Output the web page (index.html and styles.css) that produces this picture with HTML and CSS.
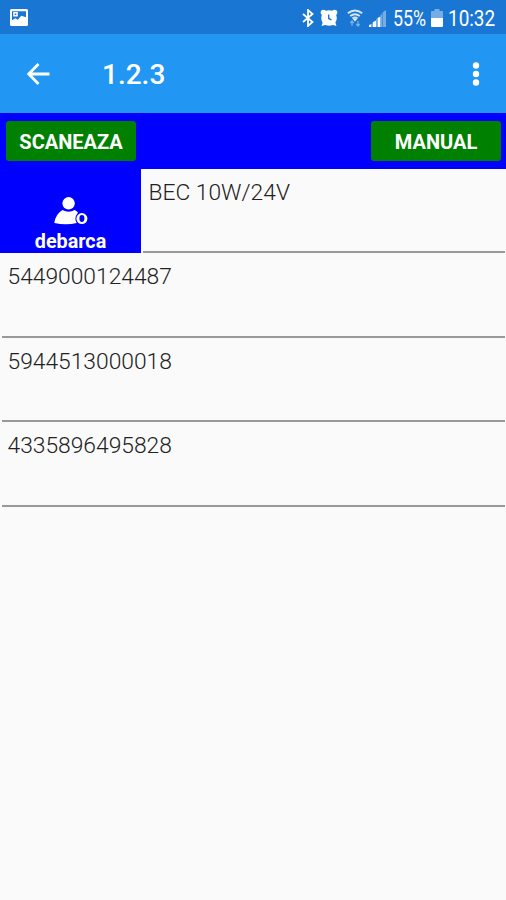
FILE: index.html
```html
<!DOCTYPE html>
<html lang="ro">
<head>
  <meta charset="utf-8">
  <title>1.2.3</title>
  <meta name="viewport" content="width=device-width, initial-scale=1">
  <link rel="stylesheet" href="styles.css">
</head>
<body>
  <div class="statusbar">
    <svg class="picture" width="18" height="17" viewBox="0 0 18 17">
      <path fill="#fff" fill-rule="evenodd" d="M1.500 0h15A1.500 1.500 0 0 1 18 1.500v14a1.500 1.500 0 0 1-1.500 1.500h-15A1.500 1.500 0 0 1 0 15.500v-14A1.500 1.500 0 0 1 1.500 0zM2 2.200v9l3.300-2 2.500 1.500 3.500-4 4.700 1.500v-6z"/>
      <path fill="#fff" fill-rule="evenodd" d="M3.200 3h4.600v4.600H3.200zM4.700 4.500v1.600h1.600V4.500z"/>
    </svg>
    <div class="status-icons">
      <svg class="bluetooth" width="12" height="18" viewBox="0 0 12 18">
        <path d="M1 5l9.500 8L6 17V1l4.500 4L1 13" fill="none" stroke="#fff" stroke-width="1.800"/>
      </svg>
      <svg class="alarm" width="18" height="18" viewBox="0 0 18 18">
        <g fill="#fff">
          <circle cx="9" cy="9" r="7.800"/>
          <circle cx="3.500" cy="3.500" r="2.800"/>
          <circle cx="14.500" cy="3.500" r="2.800"/>
          <path d="M1.500 17l2-6 5 4zM16.500 17l-2-6-5 4z"/>
        </g>
        <path d="M8.700 5.500v4l2.800 1.300" fill="none" stroke="#1976d2" stroke-width="1.400"/>
      </svg>
      <svg class="wifi" width="16" height="18" viewBox="0 0 16 18">
        <g fill="none" stroke="#d4e6f7" stroke-width="1.900">
          <path d="M.8 4.200q7.200-5.600 14.400 0"/>
          <path d="M3.200 7q4.800-3.700 9.600 0"/>
          <path d="M5.500 9.600q2.500-2 5 0"/>
        </g>
        <path d="M8 12.500L5.800 9.800h4.400z" fill="#fff"/>
        <path d="M5 12v5M3.300 14L5 12l1.700 2M11 12v5M9.300 15l1.700 2 1.700-2" fill="none" stroke="#7db3e6" stroke-width="1.200"/>
      </svg>
      <svg class="signal" width="17" height="17" viewBox="0 0 17 17">
        <path fill="#fff" d="M0 15l2.500-1V17H0zM4 12l3-1.500V17H4zM8.500 8l3-1.500V17h-3z"/>
        <path fill="#75ade4" d="M2.500 14L4 12.500V17H2.500zM7 9.500L8.500 8v9H7zM11.500 5L13 4v13h-1.500zM13.500 2.500L17 0v17h-3.500z"/>
      </svg>
      <span class="percent">55%</span>
      <svg class="battery" width="12" height="18" viewBox="0 0 12 18">
        <path fill="#75ade4" d="M3.500 0h5v2H11a1 1 0 0 1 1 1v6H0V3a1 1 0 0 1 1-1h2.500z"/>
        <path fill="#fff" d="M0 9h12v8a1 1 0 0 1-1 1H1a1 1 0 0 1-1-1z"/>
      </svg>
      <span class="clock">10:32</span>
    </div>
  </div>

  <div class="appbar">
    <svg class="back" width="24" height="22" viewBox="0 0 24 22">
      <path d="M22.500 11H2M11.500 1L1.700 11l9.800 10" fill="none" stroke="#fff" stroke-width="2.800"/>
    </svg>
    <h1>1.2.3</h1>
    <svg class="more" width="8" height="24" viewBox="0 0 8 24">
      <g fill="#fff">
        <circle cx="4" cy="3.500" r="3.200"/>
        <circle cx="4" cy="12" r="3.200"/>
        <circle cx="4" cy="20.500" r="3.200"/>
      </g>
    </svg>
  </div>

  <div class="buttons">
    <button class="scan">SCANEAZA</button>
    <button class="manual">MANUAL</button>
  </div>

  <ul class="list">
    <li class="swiped">
      <div class="action">
        <svg width="34" height="28" viewBox="0 0 34 28">
          <g fill="#fff">
            <circle cx="14.600" cy="6.300" r="6.200"/>
            <path d="M.3 26Q1.500 17 8.500 13q6.100 3.600 12.200 0 1.800.8 3.300 2.500-4.500 5.500-1.200 10.500Q12 28.500.3 26z"/>
            <circle cx="27.900" cy="21.600" r="5.500"/>
          </g>
          <ellipse cx="27.900" cy="21.500" rx="2.500" ry="3.400" fill="#00f"/>
        </svg>
        <span>debarca</span>
      </div>
      <div class="item">BEC 10W/24V</div>
    </li>
    <li><div class="item">5449000124487</div></li>
    <li><div class="item">5944513000018</div></li>
    <li><div class="item">4335896495828</div></li>
  </ul>
</body>
</html>
```

FILE: styles.css
```css
* {
  box-sizing: border-box;
  margin: 0;
  padding: 0;
}

body {
  font-family: Roboto, sans-serif;
  background-color: #fafafa;
  color: #222;
  min-height: 100vh;
}

svg {
  display: block;
  flex: none;
}

.statusbar {
  display: flex;
  justify-content: space-between;
  height: 34px;
  padding: 9px 11px 0 10px;
  background-color: #1976d2;
  color: #fff;
}

.status-icons {
  display: flex;
  font-size: 21.500px;
  line-height: 19px;
}

.alarm {
  margin-left: 6px;
}

.wifi {
  margin-left: 9px;
}

.signal {
  margin: 1px 0 0 6px;
}

.percent,
.clock {
  display: block;
  white-space: nowrap;
  transform-origin: left center;
}

.percent {
  width: 34px;
  margin-left: 7px;
  transform: scaleX(.83);
}

.battery {
  margin-left: 4px;
}

.clock {
  width: 47px;
  margin-left: 5px;
  transform: scaleX(.88);
}

.appbar {
  display: flex;
  align-items: center;
  height: 79px;
  padding: 0 26px 0 27px;
  background-color: #2196f3;
  color: #fff;
}

.appbar h1 {
  flex: 1;
  margin-left: 51px;
  padding-top: 2px;
  font-size: 28px;
  font-weight: 500;
  line-height: 36px;
}

.buttons {
  display: flex;
  justify-content: space-between;
  height: 56px;
  padding: 8px 5px 0 6px;
  background-color: #00f;
}

button {
  width: 130px;
  height: 40px;
  padding-top: 1px;
  border: none;
  border-radius: 3px;
  background-color: #008000;
  color: #fff;
  font: bold 20px/40px Roboto, sans-serif;
}

.list {
  list-style: none;
}

.list li {
  display: flex;
  height: 84.400px;
  padding: 0 1px 0 2px;
}

.list .swiped {
  padding-left: 0;
}

.item {
  flex: 1;
  padding: 9px 0 0 5.500px;
  border-bottom: 2px solid #999;
  font-size: 22.800px;
  font-weight: 300;
  line-height: 30px;
}

.action {
  display: flex;
  flex-direction: column;
  align-items: center;
  width: 141px;
  margin-right: 2px;
  padding-top: 28px;
  background-color: #00f;
  color: #fff;
  font-size: 19.800px;
  font-weight: bold;
  line-height: 24px;
}

.action span {
  margin-top: 5px;
}
```
